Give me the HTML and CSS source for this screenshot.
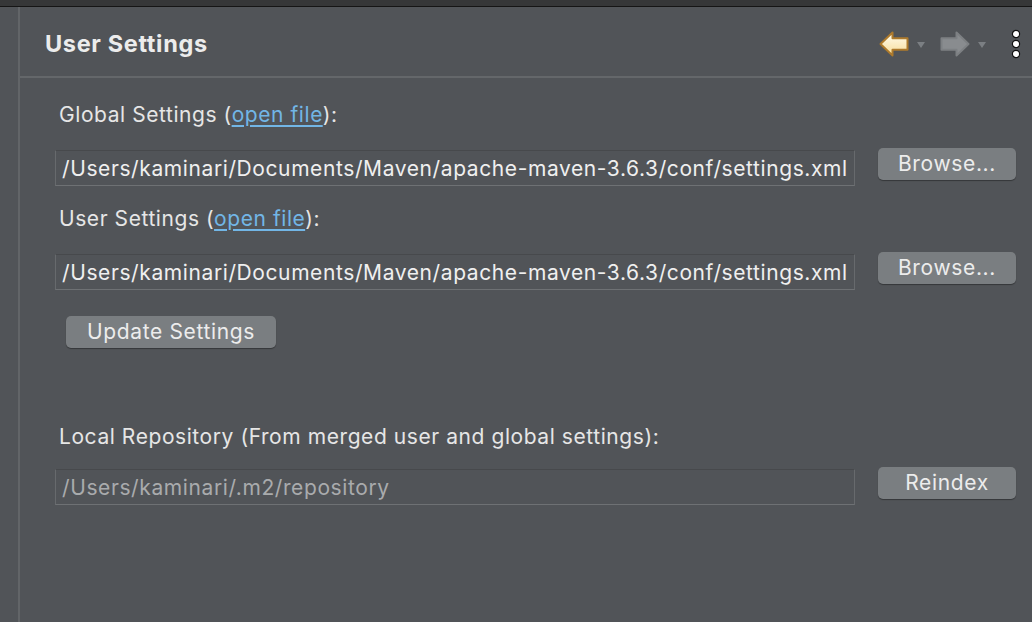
FILE: index.html
```html
<!DOCTYPE html>
<html>
<head>
<meta charset="utf-8">
<link rel="stylesheet" href="styles.css">
</head>
<body>
<div class="topbar"></div>
<div class="frame">
  <div class="sidebar"></div>
  <div class="panel">
    <div class="header">
      <h1 class="title">User Settings</h1>
      <div class="tools">
        <svg class="arrow back" width="30" height="26" viewBox="0 0 30 26">
          <defs>
            <linearGradient id="bk" x1="0" y1="0" x2="0" y2="1">
              <stop offset="0" stop-color="#fffdf0"/>
              <stop offset="1" stop-color="#f7dc98"/>
            </linearGradient>
          </defs>
          <path d="M1.5 13 L13.5 1.5 L13.5 7.2 L28.5 7.2 L28.5 18.8 L13.5 18.8 L13.5 24.5 Z" fill="url(#bk)" stroke="#ad7a2c" stroke-width="2" stroke-linejoin="round"/>
        </svg>
        <svg class="tri" width="10" height="8" viewBox="0 0 10 8"><path d="M1 1 L9 1 L5 7 Z" fill="#7b7f83"/></svg>
        <svg class="arrow fwd" width="30" height="26" viewBox="0 0 30 26">
          <path d="M28.5 13 L16.5 1.5 L16.5 7.2 L1.5 7.2 L1.5 18.8 L16.5 18.8 L16.5 24.5 Z" fill="#898c8f" stroke="#7d8083" stroke-width="2" stroke-linejoin="round"/>
        </svg>
        <svg class="tri" width="10" height="8" viewBox="0 0 10 8"><path d="M1 1 L9 1 L5 7 Z" fill="#7b7f83"/></svg>
        <svg class="more" width="10" height="30" viewBox="0 0 10 30">
          <circle cx="5" cy="5" r="3.6" fill="#fff" stroke="#111" stroke-width="1.2"/>
          <circle cx="5" cy="15" r="3.6" fill="#fff" stroke="#111" stroke-width="1.2"/>
          <circle cx="5" cy="25" r="3.6" fill="#fff" stroke="#111" stroke-width="1.2"/>
        </svg>
      </div>
    </div>
    <div class="content">
      <div class="label">Global Settings (<a class="link" href="#">open file</a>):</div>
      <div class="row">
        <div class="field">/Users/kaminari/Documents/Maven/apache-maven-3.6.3/conf/settings.xml</div>
        <button class="btn browse">Browse...</button>
      </div>
      <div class="label label2">User Settings (<a class="link" href="#">open file</a>):</div>
      <div class="row">
        <div class="field">/Users/kaminari/Documents/Maven/apache-maven-3.6.3/conf/settings.xml</div>
        <button class="btn browse">Browse...</button>
      </div>
      <button class="btn update">Update Settings</button>
      <div class="label label3">Local Repository (From merged user and global settings):</div>
      <div class="row row3">
        <div class="field disabled">/Users/kaminari/.m2/repository</div>
        <button class="btn browse">Reindex</button>
      </div>
    </div>
  </div>
</div>
</body>
</html>
```

FILE: styles.css
```css
* { box-sizing: border-box; }
html, body {
  margin: 0;
  padding: 0;
  height: 100%;
  background: #515458;
  font-family: Inter, "Open Sans", "Liberation Sans", sans-serif;
  color: #e6e6e6;
  overflow: hidden;
}
.topbar {
  height: 7px;
  background: #363738;
  border-bottom: 1px solid #151515;
}
.frame {
  display: flex;
  height: calc(100% - 7px);
}
.sidebar {
  width: 20px;
  flex: none;
  border-right: 2px solid #626568;
  background: #515458;
}
.panel {
  flex: 1;
  display: flex;
  flex-direction: column;
}
.header {
  height: 71px;
  border-bottom: 2px solid #64676a;
  display: flex;
  align-items: center;
  justify-content: space-between;
  padding-left: 25px;
  padding-right: 11px;
}
.title {
  margin: 0;
  font-size: 23.5px;
  font-weight: 700;
  color: #ececec;
  letter-spacing: 0.65px;
  padding-top: 3px;
}
.tools {
  display: flex;
  align-items: center;
  padding-top: 4px;
}
.arrow { display: block; }
.tri { display: block; margin-left: 7px; margin-top: 2px; }
.fwd { margin-left: 14px; }
.more { display: block; margin-left: 24px; }
.content {
  padding: 24px 16px 0 35px;
  display: flex;
  flex-direction: column;
  align-items: flex-start;
}
.label {
  font-size: 21px;
  line-height: 26px;
  padding-left: 4px;
  letter-spacing: 0.57px;
  color: #e6e6e6;
}
.label2 { margin-top: 20px; }
.label3 { margin-top: 76px; }
.link {
  color: #72b6e6;
  text-decoration: underline;
  text-underline-offset: 3px;
}
.row {
  display: flex;
  align-items: flex-start;
  margin-top: 22px;
  width: 100%;
}
.row3 { margin-top: 19px; }
.field {
  width: 800px;
  height: 36px;
  padding: 0 6px;
  font-size: 21px;
  letter-spacing: 0.6px;
  line-height: 35px;
  color: #efefef;
  background: #515458;
  border: 1px solid #676a6d;
  border-top-color: #47494c;
  border-bottom-color: #6e7174;
  white-space: nowrap;
  overflow: hidden;
}
.field.disabled { color: #a9abad; }
.btn {
  font-family: inherit;
  font-size: 21px;
  letter-spacing: 0.65px;
  color: #ececec;
  background: #7a7e81;
  border: none;
  border-radius: 5px;
  box-shadow: 0 1px 1px rgba(0,0,0,0.35);
  height: 32px;
  padding: 0;
  line-height: 32px;
}
.browse {
  width: 138px;
  margin-left: 23px;
  margin-top: -2px;
}
.update {
  width: 210px;
  margin-left: 11px;
  margin-top: 26px;
}
```
